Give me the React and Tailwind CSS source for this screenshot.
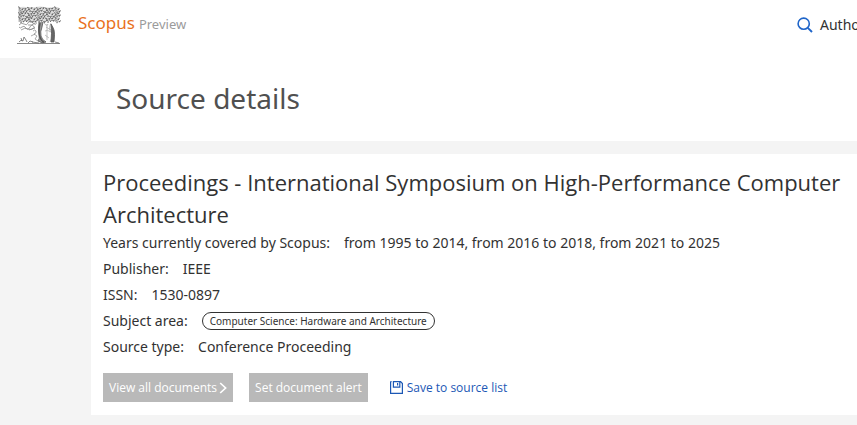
import React from 'react';

const details = [
  { label: 'Years currently covered by Scopus:', value: 'from 1995 to 2014, from 2016 to 2018, from 2021 to 2025' },
  { label: 'Publisher:', value: 'IEEE' },
  { label: 'ISSN:', value: '1530-0897' },
  { label: 'Subject area:', value: 'Computer Science: Hardware and Architecture', tag: true },
  { label: 'Source type:', value: 'Conference Proceeding' },
];

// small curled strokes that make up the foliage, alternating direction per row
const leaves = [];
for (let row = 0; row < 6; row++) {
  for (let col = 0; col < 14; col++) {
    const x = 1 + col * 3 + (row % 2) * 1.3;
    const y = 1.5 + row * 2.5 + ((col * 7 + row * 3) % 4) * 0.4;
    const bend = (col * 5 + row * 3) % 3 === 0 ? -1.8 : 1.8;
    leaves.push(`M${x} ${y}q1 ${bend} 1.8 0.3t-0.7 1.2`);
  }
}

const TreeLogo = () => (
  <svg width="44" height="39" viewBox="0 0 44 39" fill="none" stroke="#555" aria-hidden="true">
    <path d="M1 2Q5 0 9 1T18 1T28 1T37 1T43 3V13Q40 17 36 15T28 17L22 15L14 17L7 15L1 16Z" fill="#dcdcdc" stroke="none" />
    <path d={leaves.join('')} strokeWidth="0.8" />
    <path d="M2 19q2-3 5-1t4-1 5 0 3-1M2 21q1 2 3 0t4 1 4-1 4 0M4 24q4-3 7-1t7-2M18 17q-3 3-7 2M12 24l6-2" strokeWidth="0.8" stroke="#888" />
    <path d="M22 16q-1 7 0 12t-1 7q4 3 8 1-4-2-5-6t1-9l1-5" fill="#999" strokeWidth="0.8" />
    <path d="M23 17q-2 9 0 14t4 5" strokeWidth="1.5" />
    <path d="M27 17q3 4 4 1M34 17q-3 6 0 9t-1 10M29 21l5 3M28 25q3-2 5 1M28 29l4 3M30 18v16" strokeWidth="0.6" stroke="#999" />
    <path d="M34 18q2 3 3 6t0 12h-3q1-8 0-18Z" fill="#666" strokeWidth="0.8" />
    <path d="M16 25q2-2 3 0t-2 3l3 2-2 3 3 2M18 28l-4 2" strokeWidth="0.7" stroke="#888" />
    <path d="M0 37.5h43M2 36q2-3 4-1l1-4 2 3 1 2M5 35l-1-3M11 37l2-2 3 1M15 36l7 1M38 36l4 1" strokeWidth="0.7" />
  </svg>
);

const SearchIcon = () => (
  <svg width="16" height="16" viewBox="0 0 16 16" fill="none" stroke="#1f65c9" strokeWidth="1.6" aria-hidden="true">
    <circle cx="6.7" cy="6.7" r="5.6" />
    <path d="M10.8 10.8L15 15" strokeWidth="1.9" />
  </svg>
);

const SaveIcon = () => (
  <svg width="13" height="13" viewBox="0 0 13 13" fill="none" stroke="#1c58b5" strokeWidth="1.2" aria-hidden="true">
    <path d="M0.6 0.6V12.4H12.4V2.6L10.6 0.6H3.4V6.2H9.8V0.6M7.6 2V4.6M0.6 0.6H1.6" />
  </svg>
);

const ChevronIcon = () => (
  <svg width="8" height="12" viewBox="0 0 8 12" fill="none" stroke="currentColor" strokeWidth="1.7" aria-hidden="true">
    <path d="M1.2 1L6.6 6L1.2 11" />
  </svg>
);

const App = () => {
  return (
    <div className="min-h-screen bg-[#f4f4f4] font-['Noto_Sans',sans-serif] text-[#323232]">
      <header className="flex h-[58px] items-start justify-between overflow-hidden bg-white pl-[17px] pt-1.5">
        <a href="#" className="flex items-start gap-[17px] pr-4">
          <TreeLogo />
          <span className="flex items-baseline gap-1 pt-1">
            <span className="text-[17px] leading-[26px] text-[#e9711c]">Scopus</span>
            <span className="text-[13px] leading-[26px] text-[#9b9b9b]">Preview</span>
          </span>
        </a>
        <nav className="w-[60px] overflow-hidden pt-1.5">
          <a href="#" className="flex w-max items-center gap-[7px] text-[14px] leading-[26px]">
            <SearchIcon />
            Author Search
          </a>
        </nav>
      </header>

      <main className="ml-[91px] flex flex-col gap-[13px]">
        <section className="bg-white px-[25px] pb-[22px] pt-5">
          <h1 className="text-[28px] leading-[41px] text-[#505050]">Source details</h1>
        </section>

        <section className="bg-white px-3 pb-[13px] pt-3">
          <h2 className="font-['Open_Sans',sans-serif] text-[22px] leading-[32px]">
            Proceedings - International Symposium on High-Performance Computer Architecture
          </h2>

          <dl className="text-[14px] leading-[26px]">
            {details.map((item) => (
              <div key={item.label} className="flex items-center gap-[14px]">
                <dt>{item.label}</dt>
                {item.tag ? (
                  <dd className="rounded-full border border-[#323232] px-[7px] text-[10px] leading-[16px]">{item.value}</dd>
                ) : (
                  <dd>{item.value}</dd>
                )}
              </div>
            ))}
          </dl>

          <div className="mt-[13px] flex items-center gap-4 font-['Open_Sans',sans-serif] text-[12px] leading-[29px]">
            <button type="button" className="flex items-center gap-0.5 bg-[#b9b9b9] px-1.5 text-white">
              View all documents
              <ChevronIcon />
            </button>
            <button type="button" className="bg-[#b9b9b9] px-1.5 text-white">
              Set document alert
            </button>
            <a href="#" className="flex items-center gap-1 px-1.5 text-[#1c58b5]">
              <SaveIcon />
              Save to source list
            </a>
          </div>
        </section>
      </main>
    </div>
  );
};

export default App;
